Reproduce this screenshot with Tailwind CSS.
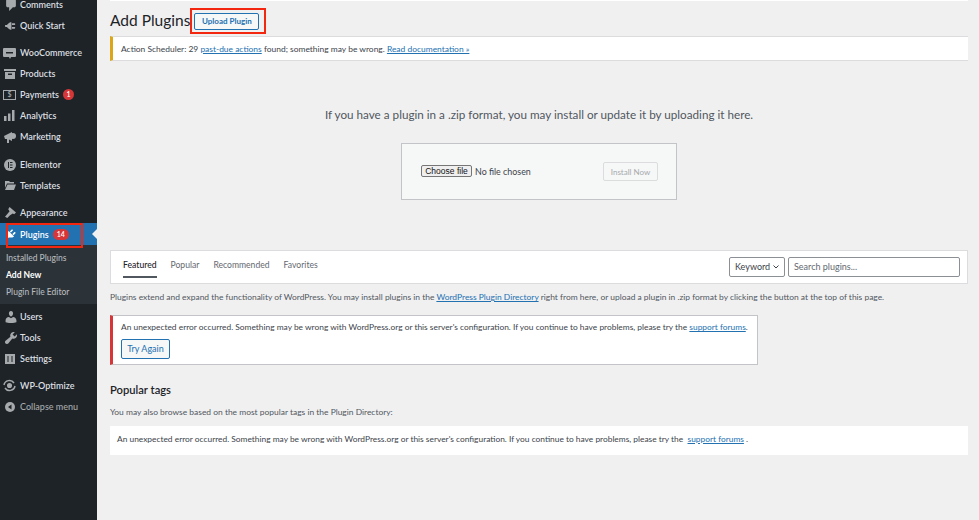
<!DOCTYPE html>
<html lang="en">
<head>
    <meta charset="UTF-8">
    <title>Add Plugins</title>
    <script src="https://cdn.jsdelivr.net/npm/@tailwindcss/browser@4"></script>
</head>
<body class="bg-[#f0f0f1] font-['Lato','Liberation_Sans',sans-serif] text-[#3c434a] overflow-hidden">
<div class="flex h-[520px] w-[979px] overflow-hidden">

    <!-- admin menu -->
    <nav class="w-[97px] h-full shrink-0 bg-[#1d2327] text-[#dcdfe1] text-[9px] font-semibold leading-none relative overflow-hidden">
        <div class="-mt-[6px]">
            <div class="h-[21px] flex items-center pl-[5px]">
                <span class="w-[15px] flex"><svg class="w-[12px] h-[12px]" viewBox="3 2 13 16" fill="#a7aaad"><path d="M5 2h9c1.100 0 2 .9 2 2v7c0 1.100-.9 2-2 2h-2l-5 5v-5H5c-1.100 0-2-.9-2-2V4c0-1.100.9-2 2-2z"/></svg></span>Comments</div>
            <div class="h-[21px] flex items-center pl-[5px] mb-[6px]">
                <span class="w-[15px] flex"><svg class="w-[12px] h-[12px]" viewBox="0 0 20 20" fill="#a7aaad"><path d="M13.110 4.360L9.870 7.600 8 5.730l3.240-3.240c.35-.34 1.050-.2 1.560.32.52.51.66 1.210.31 1.550zm-8 1.770l.91-1.120 9.010 9.010-1.190.84c-.71.71-2.630 1.160-3.820 1.160H6.140L4.900 17.260c-.59.59-1.540.59-2.120 0-.59-.58-.59-1.530 0-2.120l1.240-1.240v-3.880c0-1.130.4-3.190 1.090-3.890zm7.260 3.970l3.240-3.240c.34-.35 1.040-.21 1.550.31.52.51.66 1.210.31 1.550l-3.240 3.250z" transform="rotate(45 10 10)"/></svg></span>Quick Start</div>

            <div class="h-[21px] flex items-center pl-[3px]">
                <span class="w-[17px] flex"><svg class="w-[13px] h-[12px]" viewBox="0 0 13 12"><path fill="#a7aaad" d="M1 1h11a1 1 0 0 1 1 1v7a1 1 0 0 1-1 1H8l-1 2-1-2H1a1 1 0 0 1-1-1V2a1 1 0 0 1 1-1z"/><path fill="#1d2327" d="M3 5h7v1.500H3z"/></svg></span>WooCommerce</div>
            <div class="h-[21px] flex items-center pl-[4px]">
                <span class="w-[16px] flex"><svg class="w-[12px] h-[11px]" viewBox="0 0 12 11"><path fill="#a7aaad" d="M0 1h12v2H0zM1 4h10v7H1z"/><path fill="#1d2327" d="M4 5.500h4V7H4z"/></svg></span>Products</div>
            <div class="h-[21px] flex items-center pl-[3px]">
                <span class="w-[17px] flex"><span class="w-[13px] h-[10px] border border-[#a7aaad] text-[#a7aaad] text-[7px] flex items-center justify-center">$</span></span>
                <span>Payments</span><span class="ml-[4px] w-[11px] h-[11px] rounded-full bg-[#d63638] text-white text-[7px] flex items-center justify-center">1</span></div>
            <div class="h-[21px] flex items-center pl-[4px]">
                <span class="w-[16px] flex"><svg class="w-[11px] h-[11px]" viewBox="0 0 11 11" fill="#a7aaad"><path d="M0 6h2.500v5H0zM4 3.500h2.500V11H4zM8 0h2.500v11H8z"/></svg></span>Analytics</div>
            <div class="h-[21px] flex items-center pl-[4px] mb-[7px]">
                <span class="w-[16px] flex"><svg class="w-[12px] h-[12px]" viewBox="0 0 12 12" fill="#a7aaad"><path d="M0 5l8-4v9L5 8.500 5 12H3V8H1z"/><circle cx="9" cy="5" r="3"/></svg></span>Marketing</div>

            <div class="h-[21px] flex items-center pl-[4px]">
                <span class="w-[16px] flex"><svg class="w-[12px] h-[12px]" viewBox="0 0 12 12"><circle cx="6" cy="6" r="6" fill="#a7aaad"/><path fill="#1d2327" d="M4 3h1v6H4zM6 3h2.500v1H6zM6 5.500h2.500v1H6zM6 8h2.500v1H6z"/></svg></span>Elementor</div>
            <div class="h-[21px] flex items-center pl-[5px] mb-[6px]">
                <span class="w-[15px] flex"><svg class="w-[11px] h-[9px]" viewBox="0 0 11 9" fill="#a7aaad"><path d="M0 0h4l1 1h4v1.500H2L0 7zM2.500 3.500H11L9 9H0z"/></svg></span>Templates</div>

            <div class="h-[21px] flex items-center pl-[5px]">
                <span class="w-[15px] flex"><svg class="w-[11px] h-[11px]" viewBox="0 0 12 12" fill="#a7aaad"><path d="M5 0l7 6-2 2-1.500-1-3 2-3 3-2.500-1.500 3-3.500 2-2.500-1.500-2z"/></svg></span>Appearance</div>

            <!-- current menu item -->
            <div class="h-[22px] flex items-center pl-[5px] bg-[#2271b1] text-white relative">
                <span class="w-[15px] flex"><svg class="w-[12px] h-[12px]" viewBox="0 0 20 20" fill="#fff"><path d="M13.110 4.360L9.870 7.600 8 5.730l3.240-3.240c.35-.34 1.050-.2 1.560.32.52.51.66 1.210.31 1.550zm-8 1.770l.91-1.120 9.010 9.010-1.190.84c-.71.71-2.630 1.160-3.820 1.160H6.140L4.900 17.260c-.59.59-1.540.59-2.120 0-.59-.58-.59-1.530 0-2.120l1.240-1.240v-3.880c0-1.130.4-3.190 1.090-3.890zm7.260 3.970l3.240-3.240c.34-.35 1.040-.21 1.550.31.52.51.66 1.210.31 1.550l-3.240 3.250z"/></svg></span>
                <span>Plugins</span><span class="ml-[4px] px-[4px] h-[11px] rounded-full bg-[#d63638] text-white text-[7px] flex items-center">14</span>
                <span class="absolute right-0 top-[6px] w-0 h-0 border-y-[5px] border-y-transparent border-r-[5px] border-r-[#f0f0f1]"></span>
            </div>
            <div class="bg-[#2c3338] h-[59px] pt-[5px] pl-[6px] text-[8.500px] font-medium text-[#b4b9be]">
                <div class="h-[17px] flex items-center">Installed Plugins</div>
                <div class="h-[17px] flex items-center text-white font-bold">Add New</div>
                <div class="h-[17px] flex items-center">Plugin File Editor</div>
            </div>
            <div class="h-[2px]"></div>

            <div class="h-[21px] flex items-center pl-[5px]">
                <span class="w-[15px] flex"><svg class="w-[12px] h-[12px]" viewBox="2 2 16 16" fill="#a7aaad"><path d="M10 9.250c-2.270 0-2.730-3.440-2.730-3.440C7 4.020 7.820 2 9.970 2c2.160 0 2.980 2.020 2.710 3.810 0 0-.41 3.440-2.680 3.440zm0 2.570L12.720 10c2.390 0 4.520 2.330 4.520 4.530v2.490s-3.650 1.130-7.240 1.130c-3.650 0-7.240-1.130-7.240-1.130v-2.490c0-2.250 1.940-4.480 4.470-4.480z"/></svg></span>Users</div>
            <div class="h-[21px] flex items-center pl-[5px]">
                <span class="w-[15px] flex"><svg class="w-[12px] h-[12px]" viewBox="2 2 16 16" fill="#a7aaad"><path d="M16.680 9.770c-1.340 1.340-3.300 1.670-4.950.99l-5.410 6.520c-.99.99-2.590.99-3.580 0s-.99-2.590 0-3.570l6.520-5.420c-.68-1.650-.35-3.610.99-4.950 1.280-1.280 3.120-1.620 4.720-1.060l-2.890 2.890 2.820 2.820 2.860-2.870c.53 1.580.18 3.390-1.080 4.650z"/></svg></span>Tools</div>
            <div class="h-[21px] flex items-center pl-[5px] mb-[6px]">
                <span class="w-[15px] flex"><svg class="w-[10px] h-[10px]" viewBox="0 0 10 10"><path fill="#a7aaad" d="M0 0h10v10H0z"/><path fill="#1d2327" d="M2.500 2h1v6h-1zM6.500 2h1v6h-1z"/></svg></span>Settings</div>

            <div class="h-[21px] flex items-center pl-[3px]">
                <span class="w-[17px] flex"><svg class="w-[13px] h-[13px]" viewBox="0 0 13 13" fill="none" stroke="#a7aaad" stroke-width="1.500"><path d="M1 6a5.500 5.500 0 0 1 10-2M12 7a5.500 5.500 0 0 1-10 2"/><circle cx="6.500" cy="6.500" r="1.800" fill="#a7aaad"/></svg></span>WP-Optimize</div>
            <div class="h-[21px] flex items-center pl-[5px] font-medium text-[#a7aaad]">
                <span class="w-[15px] flex"><svg class="w-[10px] h-[10px]" viewBox="0 0 10 10"><circle cx="5" cy="5" r="5" fill="#a7aaad"/><path fill="#1d2327" d="M6.500 2.500v5L3 5z"/></svg></span>Collapse menu</div>
        </div>
        <div class="absolute left-[6px] top-[223px] w-[77px] h-[25px] border-[2.500px] border-[#f3260f]"></div>
    </nav>

    <!-- page content -->
    <main class="flex-1 min-w-0 pl-[13px] pr-[11px] text-[8.450px] relative">
        <div class="h-px bg-white"></div>
        <div class="h-[35px] flex items-center pt-[5px]">
            <h1 class="text-[15.500px] leading-none text-[#1d2327]">Add Plugins</h1>
            <a class="ml-[4px] w-[65px] h-[17px] flex items-center justify-center rounded-[2px] border border-[#2271b1] bg-[#f6f7f7] text-[#2271b1] font-bold text-[8px]">Upload Plugin</a>
        </div>
        <div class="h-[25px] flex items-center pl-[8px] pt-px bg-white border-y border-y-[#dcdcde] border-l-[3px] border-l-[#dba617]">
            <p>Action Scheduler: 29 <a class="text-[#2271b1] underline">past-due actions</a> found; something may be wrong. <a class="text-[#2271b1] underline">Read documentation »</a></p>
        </div>

        <p class="mt-[45px] text-center text-[11.700px] leading-[16px] text-[#50575e]">If you have a plugin in a .zip format, you may install or update it by uploading it here.</p>

        <div class="mt-[21px] ml-[291px] w-[276px] h-[57px] flex items-center justify-between pl-[19px] pr-[18px] bg-[#f6f7f7] border border-[#c3c4c7]">
            <div class="flex items-center gap-[3px]">
                <span class="w-[51px] h-[12px] flex items-center justify-center bg-[#efefef] border border-[#767676] rounded-[2px] text-[#111] font-['Liberation_Sans'] text-[8.500px]">Choose file</span>
                <span class="text-[8.900px] text-[#3c434a]">No file chosen</span>
            </div>
            <span class="w-[55px] h-[19px] flex items-center justify-center rounded-[2px] border border-[#dcdcde] text-[#a7aaad] text-[8px]">Install Now</span>
        </div>

        <div class="mt-[50px] h-[34px] flex items-center justify-between pl-[12px] pr-[7px] bg-white border border-[#dcdcde]">
            <div class="flex gap-[14px] items-center text-[8.600px] -mt-[3px]">
                <span class="text-[#1d2327] font-medium relative">Featured<span class="absolute left-0 right-0 top-[17px] h-[2px] bg-[#50575e]"></span></span>
                <span class="text-[#646970]">Popular</span>
                <span class="text-[#646970]">Recommended</span>
                <span class="text-[#646970]">Favorites</span>
            </div>
            <div class="flex gap-[3px]">
                <div class="w-[56px] h-[20px] flex items-center justify-between pl-[5px] pr-[5px] rounded-[2px] border border-[#8c8f94] text-[9px]">Keyword
                    <svg class="w-[6px] h-[4px]" viewBox="0 0 6 4" fill="none" stroke="#3c434a"><path d="M.5.500L3 3 5.500.500"/></svg>
                </div>
                <div class="w-[172px] h-[20px] flex items-center pl-[5px] rounded-[2px] border border-[#8c8f94] text-[9px] text-[#646970]">Search plugins...</div>
            </div>
        </div>

        <p class="mt-[8px] leading-[11px] text-[#50575e] whitespace-nowrap">Plugins extend and expand the functionality of WordPress. You may install plugins in the <a class="text-[#2271b1] underline">WordPress Plugin Directory</a> right from here, or upload a plugin in .zip format by clicking the button at the top of this page.</p>

        <div class="mt-[12px] w-[648px] h-[50px] pl-[8px] pt-[6px] bg-white border-y border-r border-[#c3c4c7] border-l-[3px] border-l-[#d63638]">
            <p class="leading-[11px] text-[8.400px] whitespace-nowrap">An unexpected error occurred. Something may be wrong with WordPress.org or this server's configuration. If you continue to have problems, please try the <a class="text-[#2271b1] underline">support forums</a>.</p>
            <a class="mt-[6px] w-[49px] h-[20px] flex items-center justify-center rounded-[2px] border border-[#2271b1] bg-[#f6f7f7] text-[#2271b1] text-[9px]">Try Again</a>
        </div>

        <h2 class="mt-[18px] text-[11.200px] leading-[14px] font-semibold text-[#1d2327]">Popular tags</h2>
        <p class="mt-[10px] leading-[11px] text-[#50575e]">You may also browse based on the most popular tags in the Plugin Directory:</p>
        <div class="mt-[8px] h-[29px] flex items-center pl-[7px] pb-[3px] bg-white">
            <p class="whitespace-nowrap text-[8.400px]">An unexpected error occurred. Something may be wrong with WordPress.org or this server's configuration. If you continue to have problems, please try the &nbsp;<a class="text-[#2271b1] underline">support forums</a> .</p>
        </div>

        <div class="absolute left-[93px] top-[8px] w-[76px] h-[26px] border-[2.500px] border-[#f3260f]"></div>
    </main>
</div>
</body>
</html>
